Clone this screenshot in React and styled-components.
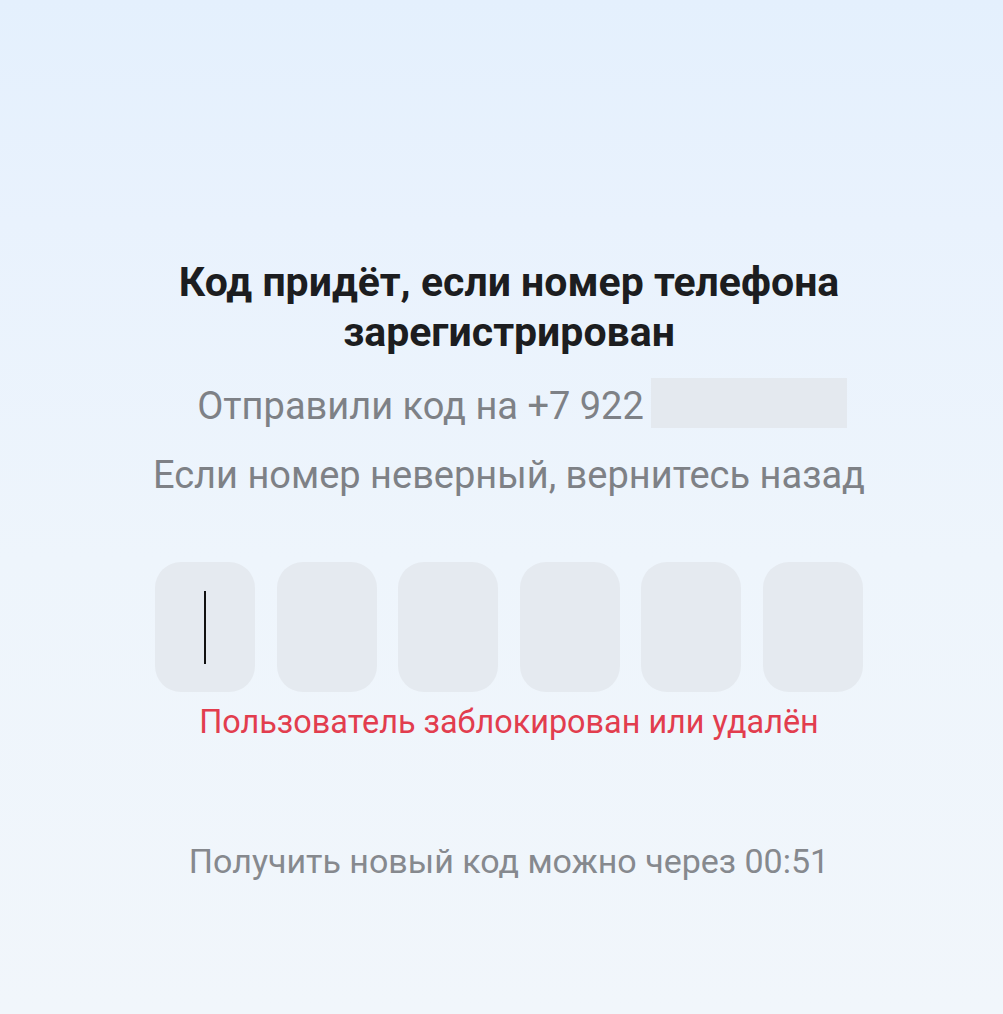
import React from 'react';
import styled, { createGlobalStyle } from 'styled-components';

const GlobalStyle = createGlobalStyle`
  html, body {
    margin: 0;
    padding: 0;
  }
  body {
    font-family: Roboto, "Noto Sans", sans-serif;
    background: #eef5fc;
  }
`;

const Screen = styled.div`
  width: 1003px;
  height: 1014px;
  background: linear-gradient(180deg, #e4f0fd 0%, #e9f2fd 22%, #eef5fc 55%, #f1f6fb 100%);
  display: flex;
  justify-content: center;
  overflow: hidden;
`;

const Content = styled.div`
  width: 708px;
  margin-left: 15px;
  padding-top: 257px;
  display: flex;
  flex-direction: column;
  align-items: center;
`;

const Title = styled.h1`
  margin: 0;
  font-size: 41px;
  line-height: 50px;
  font-weight: 700;
  color: #1c1d20;
  text-align: center;
  white-space: nowrap;
`;

const Hint = styled.p`
  margin: ${(p) => p.$top || 0}px 0 0 ${(p) => p.$shift || 0}px;
  font-size: 38px;
  line-height: 50px;
  font-weight: 400;
  color: #7e8186;
  text-align: center;
  white-space: nowrap;
  display: flex;
  align-items: center;
  gap: 7px;
`;

const HiddenNumber = styled.span`
  display: inline-block;
  width: 196px;
  height: 50px;
  margin-bottom: 6px;
  background: #e4e9ef;
`;

const CodeRow = styled.div`
  margin-top: 62px;
  width: 100%;
  display: flex;
  justify-content: space-between;
`;

const Cell = styled.div`
  width: 100px;
  height: 130px;
  border-radius: 26px;
  background: #e5eaf0;
  display: flex;
  align-items: center;
  justify-content: center;
`;

const Caret = styled.span`
  width: 2px;
  height: 73px;
  background: #111;
`;

const ErrorText = styled.p`
  margin: 10px 0 0;
  font-size: 32.4px;
  line-height: 40px;
  color: #e23d4e;
  text-align: center;
  white-space: nowrap;
`;

const Timer = styled.p`
  margin: 99px 0 0;
  font-size: 34px;
  line-height: 40px;
  color: #86898e;
  text-align: center;
  white-space: nowrap;
`;

export default function App() {
  const cells = [0, 1, 2, 3, 4, 5];
  return (
    <>
      <GlobalStyle />
      <Screen>
        <Content>
          <Title>
            Код придёт, если номер телефона
            <br />
            зарегистрирован
          </Title>
          <Hint $top={21} $shift={26}>
            Отправили код на +7 922
            <HiddenNumber />
          </Hint>
          <Hint $top={16}>Если номер неверный, вернитесь назад</Hint>
          <CodeRow>
            {cells.map((i) => (
              <Cell key={i}>{i === 0 && <Caret />}</Cell>
            ))}
          </CodeRow>
          <ErrorText>Пользователь заблокирован или удалён</ErrorText>
          <Timer>Получить новый код можно через 00:51</Timer>
        </Content>
      </Screen>
    </>
  );
}
